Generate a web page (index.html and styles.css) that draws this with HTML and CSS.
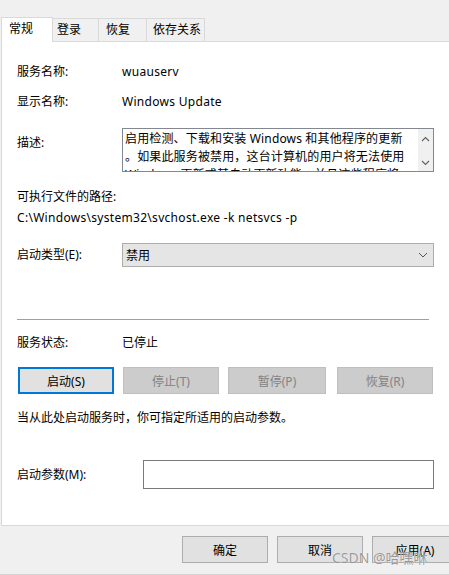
FILE: index.html
```html
<!DOCTYPE html>
<html lang="zh-CN">
<head>
<meta charset="utf-8">
<title>Windows Update 的属性</title>
<link rel="stylesheet" href="styles.css">
</head>
<body>
<div class="dialog">
  <div class="tabs">
    <div class="tab active t1">常规</div>
    <div class="tab t2">登录</div>
    <div class="tab t3">恢复</div>
    <div class="tab t4">依存关系</div>
  </div>
  <div class="panel">
    <div class="row r-name"><span class="label">服务名称:</span><span class="value latin">wuauserv</span></div>
    <div class="row r-display"><span class="label">显示名称:</span><span class="value latin">Windows Update</span></div>
    <div class="row r-desc">
      <span class="label desc-label">描述:</span>
      <div class="desc-box">
        <div class="desc-text">
          <div class="dl">启用检测、下载和安装 Windows 和其他程序的更新</div>
          <div class="dl">。如果此服务被禁用，这台计算机的用户将无法使用</div>
          <div class="dl">Windows 更新或其自动更新功能，并且这些程序将</div>
        </div>
        <div class="scrollbar">
          <svg class="arrow" width="9" height="6" viewBox="0 0 9 6"><path d="M1 5 L4.5 1.5 L8 5" fill="none" stroke="#606060" stroke-width="1.1"/></svg>
          <svg class="arrow" width="9" height="6" viewBox="0 0 9 6"><path d="M1 1 L4.5 4.5 L8 1" fill="none" stroke="#606060" stroke-width="1.1"/></svg>
        </div>
      </div>
    </div>
    <div class="line r-pathlabel">可执行文件的路径:</div>
    <div class="line r-path latin">C:\Windows\system32\svchost.exe -k netsvcs -p</div>
    <div class="row r-type">
      <span class="label">启动类型(E):</span>
      <div class="combo">
        <span>禁用</span>
        <svg width="10" height="6" viewBox="0 0 10 6"><path d="M1 1 L5 5 L9 1" fill="none" stroke="#555" stroke-width="1"/></svg>
      </div>
    </div>
    <div class="sep"></div>
    <div class="row r-status"><span class="label">服务状态:</span><span class="value">已停止</span></div>
    <div class="btnrow">
      <div class="btn focus">启动(S)</div>
      <div class="btn disabled">停止(T)</div>
      <div class="btn disabled">暂停(P)</div>
      <div class="btn disabled">恢复(R)</div>
    </div>
    <div class="line r-hint">当从此处启动服务时，你可指定所适用的启动参数。</div>
    <div class="row r-param">
      <span class="label plabel">启动参数(M):</span>
      <div class="input"></div>
    </div>
  </div>
  <div class="footer">
    <div class="btn fbtn">确定</div>
    <div class="btn fbtn">取消</div>
    <div class="btn fbtn">应用(A)</div>
  </div>
  <div class="bottomline"></div>
  <div class="watermark">CSDN @哈嘿咻</div>
</div>
</body>
</html>
```

FILE: styles.css
```css
html, body {
  margin: 0;
  padding: 0;
  background: #f0f0f0;
  overflow: hidden;
}
body {
  width: 449px;
  height: 575px;
  font-family: "Noto Sans", "Noto Sans CJK SC", sans-serif;
  font-size: 12px;
  color: #000;
}
.dialog {
  position: relative;
  width: 449px;
  height: 575px;
}
.tabs {
  display: flex;
  align-items: flex-end;
  height: 41px;
  box-sizing: border-box;
  padding-left: 1px;
}
.tab {
  box-sizing: border-box;
  height: 23px;
  line-height: 21px;
  border: 1px solid #d9d9d9;
  border-bottom: none;
  border-left: none;
  background: #f0f0f0;
  white-space: nowrap;
}
.tab.active {
  height: 25px;
  line-height: 22px;
  background: #fff;
  border-left: 1px solid #d9d9d9;
  margin-bottom: -1px;
  position: relative;
  z-index: 1;
}
.t1 { width: 52px; padding-left: 7px; }
.t2 { width: 46px; padding-left: 4px; }
.t3 { width: 48px; padding-left: 7px; }
.t4 { width: 58px; padding-left: 6px; }

.panel {
  box-sizing: border-box;
  margin-left: 1px;
  height: 485px;
  background: #fff;
  border: 1px solid #d9d9d9;
  border-right: none;
  padding: 0 15px 0 15px;
}
.row {
  display: flex;
  align-items: center;
}
.label {
  width: 105px;
  flex: none;
  line-height: 20px;
  white-space: nowrap;
}
.value, .line {
  line-height: 20px;
  white-space: nowrap;
}
.latin { letter-spacing: 0.3px; }
.r-name { margin-top: 20px; }
.r-display { margin-top: 10px; }
.r-desc { margin-top: 16px; align-items: flex-start; }
.desc-label { margin-top: 5px; }
.desc-box {
  flex: 1;
  height: 44px;
  box-sizing: border-box;
  border: 1px solid #828790;
  display: flex;
  background: #fff;
}
.desc-text {
  flex: 1;
  overflow: hidden;
  padding: 1px 0 0 2px;
}
.dl {
  line-height: 18px;
  white-space: nowrap;
  letter-spacing: 0.15px;
}
.scrollbar {
  width: 15px;
  background: #f0f0f0;
  display: flex;
  flex-direction: column;
  justify-content: space-between;
  align-items: center;
  padding: 7px 0 5px;
  box-sizing: border-box;
}
.arrow { display: block; }
.r-pathlabel { margin-top: 15px; }
.r-path { margin-top: 1px; }
.r-type { margin-top: 15px; }
.combo {
  flex: 1;
  height: 24px;
  box-sizing: border-box;
  border: 1px solid #adadad;
  background: #e5e5e5;
  display: flex;
  align-items: center;
  justify-content: space-between;
  padding: 0 5px 0 3px;
}
.sep {
  margin-top: 52px;
  margin-right: 5px;
  height: 1px;
  background: #a0a0a0;
}
.r-status { margin-top: 13px; }
.btnrow {
  margin-top: 14px;
  display: flex;
  gap: 9px;
  padding-left: 1px;
}
.btn {
  box-sizing: border-box;
  height: 27px;
  width: 96px;
  border: 1px solid #adadad;
  background: #e1e1e1;
  display: flex;
  align-items: center;
  justify-content: center;
  white-space: nowrap;
}
.btnrow .btn:nth-child(3) { width: 98px; }
.btnrow .btn:nth-child(4) { margin-left: 2px; }
.btn.focus {
  border: 2px solid #0078d7;
}
.btn.disabled {
  background: #cccccc;
  border-color: #bfbfbf;
  color: #838383;
}
.r-hint { margin-top: 14px; }
.r-param { margin-top: 32px; }
.plabel { width: 126px; }
.input {
  flex: 1;
  height: 29px;
  box-sizing: border-box;
  border: 1px solid #7a7a7a;
  background: #fff;
}
.footer {
  margin-top: 10px;
  display: flex;
  gap: 9px;
  padding-left: 182px;
}
.fbtn {
  width: 86px;
  flex: none;
}
.bottomline {
  position: absolute;
  left: 0;
  right: 0;
  top: 574px;
  height: 1px;
  background: #d4d4d4;
}
.watermark {
  position: absolute;
  left: 332px;
  top: 548px;
  font-size: 14px;
  line-height: 20px;
  color: rgba(120, 120, 120, 0.75);
  white-space: nowrap;
  text-shadow: 0 0 1px #fff;
}
```
